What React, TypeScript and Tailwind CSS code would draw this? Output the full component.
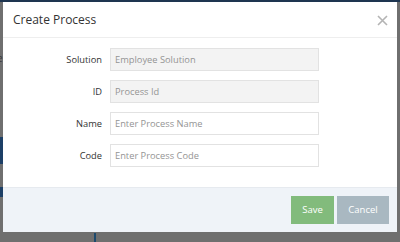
import React from "react";

const fields = [
  { label: "Solution", placeholder: "Employee Solution", disabled: true },
  { label: "ID", placeholder: "Process Id", disabled: true },
  { label: "Name", placeholder: "Enter Process Name", disabled: false },
  { label: "Code", placeholder: "Enter Process Code", disabled: false },
];

export default function App() {
  return (
    <div
      className="relative w-[400px] h-[242px] overflow-hidden bg-[#6f6f6f]"
      style={{ fontFamily: '"Open Sans", "Noto Sans", sans-serif' }}
    >
      {/* page behind the overlay */}
      <div className="absolute left-0 top-0 w-full h-[2px] bg-[#1e3550]" />
      <div className="absolute left-0 top-[137px] w-[3px] h-[27px] bg-[#1d3f66]" />
      <div className="absolute left-0 top-[187px] w-[3px] h-[10px] bg-[#1d3f66]" />
      <div className="absolute left-[94px] top-[233px] w-[2px] h-[9px] bg-[#1d4a6e]" />
      <div className="absolute left-[-3px] top-[53px] text-[10px] leading-none text-[#3a3a3a]">e</div>

      <div className="relative pt-[2px] pl-[3px]">
        <div className="w-[394px] h-[230px] bg-white flex flex-col">
          <div className="h-[36px] flex items-center justify-between pl-[10px] pr-[9px] border-b border-[#eeeeee]">
            <span className="text-[12px] text-[#333333] leading-none">Create Process</span>
            <svg width="11" height="11" viewBox="0 0 11 11" className="mt-[2px]">
              <path d="M1 1 L10 10 M10 1 L1 10" stroke="#b4b4b4" strokeWidth="1.6" />
            </svg>
          </div>

          <div className="flex-1 flex flex-col gap-[9px] pt-[10px]">
            {fields.map((f) => (
              <div key={f.label} className="flex items-center">
                <label className="w-[99px] text-right text-[9.3px] text-[#333333]">{f.label}</label>
                <input
                  readOnly
                  placeholder={f.placeholder}
                  className={`ml-[8px] w-[209px] h-[23px] px-[4px] text-[9.3px] border border-[#e2e2e2] outline-none placeholder:text-[#949494] ${
                    f.disabled ? "bg-[#f3f3f3]" : "bg-white"
                  }`}
                />
              </div>
            ))}
          </div>

          <div className="h-[45px] bg-[#eff3f8] border-t border-[#e6eaef] flex items-center justify-end gap-[3px] pr-[8px]">
            <button className="w-[43px] h-[28px] bg-[#82bb7c] text-white text-[9.5px]">Save</button>
            <button className="w-[52px] h-[28px] bg-[#a9b8c1] text-white text-[9.5px]">Cancel</button>
          </div>
        </div>
      </div>
    </div>
  );
}
